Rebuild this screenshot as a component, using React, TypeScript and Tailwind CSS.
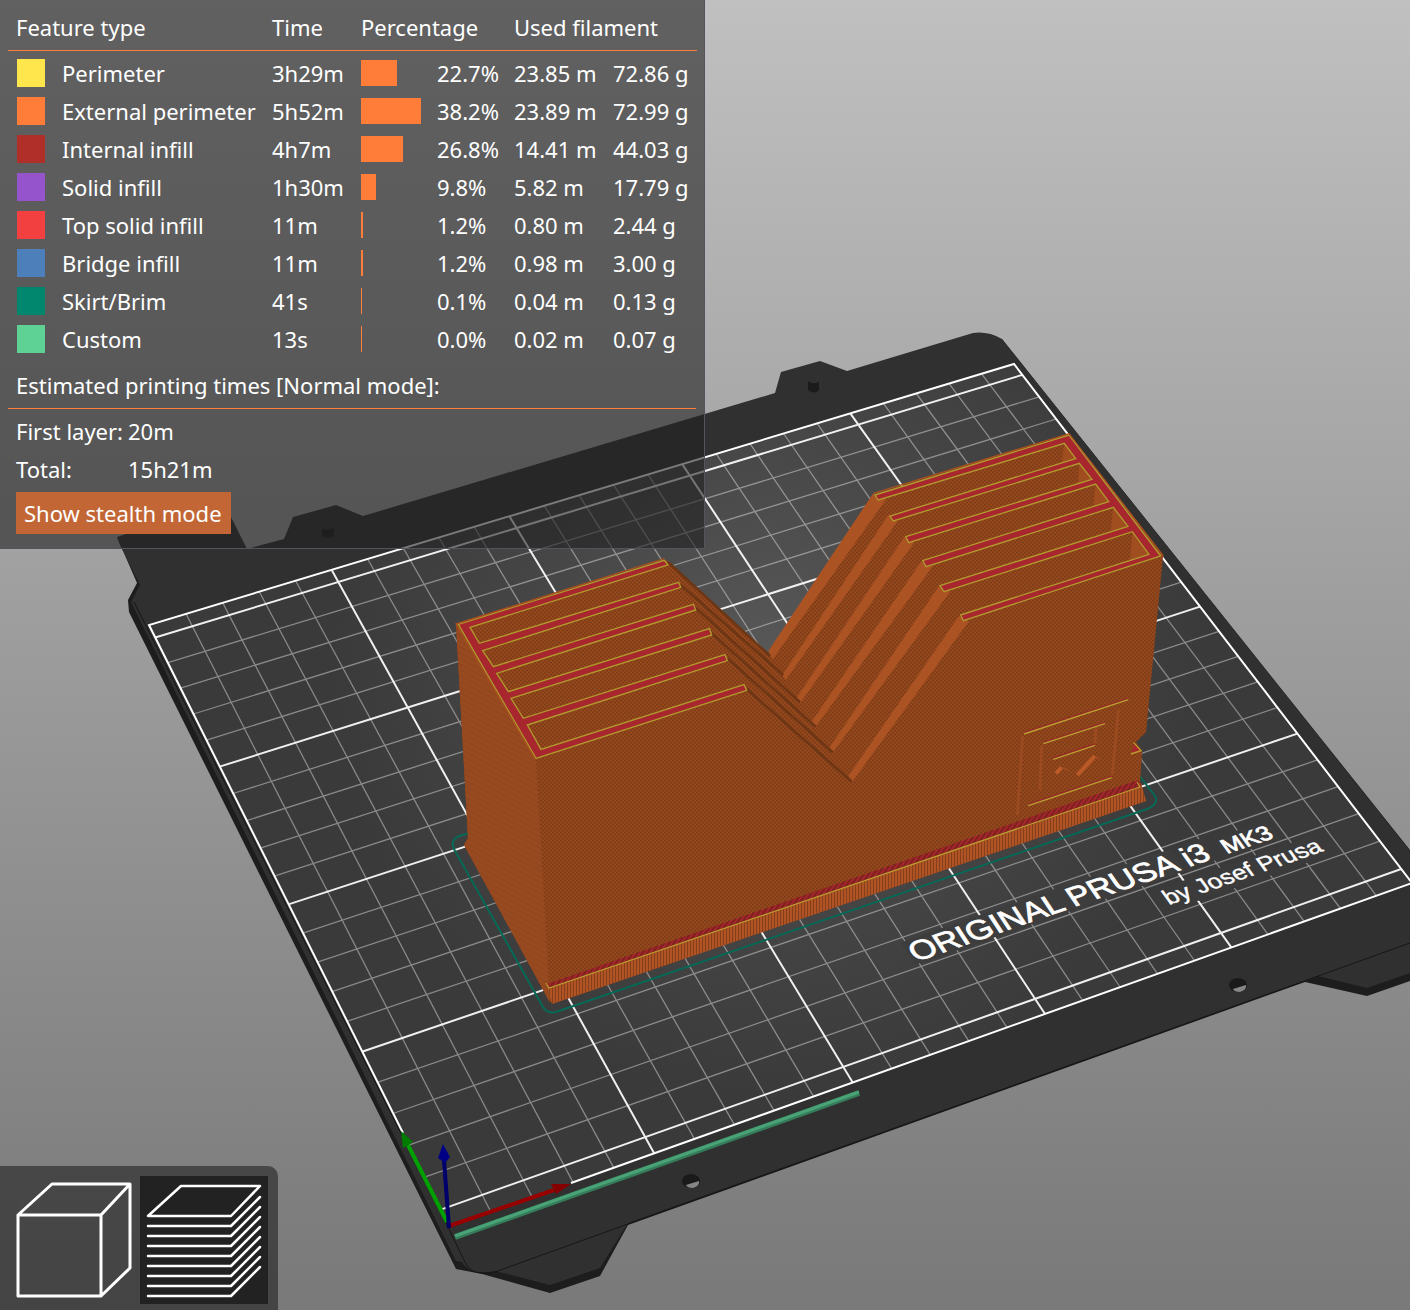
import React from 'react';

interface Feature {
  name: string;
  swatch: string;
  time: string;
  percent: number;
  length: string;
  weight: string;
}

const FEATURES: Feature[] = [
  { name: 'Perimeter', swatch: 'bg-[#ffe64d]', time: '3h29m', percent: 22.7, length: '23.85 m', weight: '72.86 g' },
  { name: 'External perimeter', swatch: 'bg-[#ff7d38]', time: '5h52m', percent: 38.2, length: '23.89 m', weight: '72.99 g' },
  { name: 'Internal infill', swatch: 'bg-[#b02f29]', time: '4h7m', percent: 26.8, length: '14.41 m', weight: '44.03 g' },
  { name: 'Solid infill', swatch: 'bg-[#9654cc]', time: '1h30m', percent: 9.8, length: '5.82 m', weight: '17.79 g' },
  { name: 'Top solid infill', swatch: 'bg-[#f24040]', time: '11m', percent: 1.2, length: '0.80 m', weight: '2.44 g' },
  { name: 'Bridge infill', swatch: 'bg-[#4d80ba]', time: '11m', percent: 1.2, length: '0.98 m', weight: '3.00 g' },
  { name: 'Skirt/Brim', swatch: 'bg-[#00876e]', time: '41s', percent: 0.1, length: '0.04 m', weight: '0.13 g' },
  { name: 'Custom', swatch: 'bg-[#5ed194]', time: '13s', percent: 0.0, length: '0.02 m', weight: '0.07 g' },
];

const MAX_PERCENT = Math.max(...FEATURES.map((f) => f.percent));
const BAR_WIDTH = 60;

const BED_W = 250;
const BED_D = 210;

// Screen corners of the bed: front left, front right, back right, back left
const [P00, P10, P11, P01] = [[449, 1226], [1412, 883], [1014, 364], [149, 625]];

// Perspective mapping from bed millimetres to scene coordinates
const project = (x: number, y: number): [number, number] => {
  const dx1 = P10[0] - P11[0];
  const dx2 = P01[0] - P11[0];
  const sx = P00[0] - P10[0] + P11[0] - P01[0];
  const dy1 = P10[1] - P11[1];
  const dy2 = P01[1] - P11[1];
  const sy = P00[1] - P10[1] + P11[1] - P01[1];
  const det = dx1 * dy2 - dx2 * dy1;
  const g = (sx * dy2 - dx2 * sy) / det;
  const h = (dx1 * sy - sx * dy1) / det;
  const u = x / BED_W;
  const v = y / BED_D;
  const w = g * u + h * v + 1;
  return [
    ((P10[0] - P00[0] + g * P10[0]) * u + (P01[0] - P00[0] + h * P01[0]) * v + P00[0]) / w,
    ((P10[1] - P00[1] + g * P10[1]) * u + (P01[1] - P00[1] + h * P01[1]) * v + P00[1]) / w,
  ];
};

const segment = (x1: number, y1: number, x2: number, y2: number) => {
  const a = project(x1, y1);
  const b = project(x2, y2);
  return `M${a[0].toFixed(1)} ${a[1].toFixed(1)}L${b[0].toFixed(1)} ${b[1].toFixed(1)}`;
};

// Lays lettering flat on the bed; one text unit is a quarter of a millimetre
const onBed = (px: number, py: number, x: number, y: number) => {
  const o = project(x, y);
  const r = project(x + 1, y);
  const d = project(x, y - 1);
  const m = [r[0] - o[0], r[1] - o[1], d[0] - o[0], d[1] - o[1]].map((n) => (n / 4).toFixed(4));
  return `matrix(${m.join(' ')} ${px} ${py})`;
};

const thinLines: string[] = [];
const boldLines: string[] = [];
for (let x = 10; x < BED_W; x += 10) {
  (x % 50 === 0 ? boldLines : thinLines).push(segment(x, 0, x, BED_D));
}
for (let y = 5; y < BED_D; y += 10) {
  (y % 50 === 5 ? boldLines : thinLines).push(segment(0, y, BED_W, y));
}

const LIT_SLOPES = [
  '368,222 408,238 68,718 55,693',
  '415,285 443,303 107,780 97,765',
  '462,352 492,368 150,850 140,833',
  '513,425 547,440 197,920 185,905',
  '567,498 600,515 248,998 237,985',
  '627,588 657,603 307,1085 295,1068',
];

const DARK_SLOPES = [
  'M684 66L990 348',
  'M722 135L1030 405',
  'M767 203L1080 487',
  'M815 280L1127 560',
  'M862 355L1178 637',
  'M920 447L1235 725',
];

const POCKET_ENDS = [
  '943,70 977,116 935,128',
  '988,130 1026,178 984,190',
  '1037,192 1076,245 1030,260',
  '1090,262 1134,319 1082,333',
  '1147,335 1197,403 1140,420',
];

const Plate: React.FC = () => (
  <g>
    <path
      fill="#1d1d1d"
      d="M117 537L137 583L128 600L129 612L456 1269L482 1274L550 1293L600 1276L628 1225L1305 982L1367 996L1410 981V850L1002 339L600 520L137 572Z"
    />
    <path
      fill="#303030"
      d="M117 537L222 502L231 517L247 549L284 539L293 517L336 505L363 516L775 393L781 372L820 361L847 371L973 333Q988 331 1002 339L1410 851V973L1367 988L1318 976L628 1223L600 1268L550 1285L495 1271Q470 1276 462 1262L456 1261L131 602L140 585L120 545Z"
    />
    <path fill="none" stroke="#171717" d="M134 602L447 1225L465 1262Q470 1273 482 1273H492L628 1224L1410 943" />
    <path fill="#1b1b1b" d="M322 529v7q6 4 12 0v-8q-6 3-12 1ZM808 381v9q6 5 11 0v-8q-6 3-11-1Z" />
    {[[691, 1181], [1238, 985]].map(([cx, cy]) => (
      <g key={cx} transform={`translate(${cx} ${cy})`}>
        <ellipse rx="9" ry="7" fill="#1a1a1a" />
        <path fill="#868686" d="M-5 4L8 0Q9 5 2 7Q-4 7-5 4Z" />
      </g>
    ))}
  </g>
);

const Bed: React.FC = () => (
  <g>
    <polygon points="449,1226 1412,883 1014,364 149,625" fill="url(#bed)" />
    <path d={thinLines.join('')} stroke="#fff" strokeOpacity="0.4" strokeWidth="1.3" />
    <path d={boldLines.join('')} stroke="#fff" strokeOpacity="0.92" strokeWidth="2" />
    <path d="M403 1133L149 625L1014 364L1412 883L571 1183" fill="none" stroke="#fff" strokeWidth="2" />
    <g fontFamily="'Liberation Sans', Arial, sans-serif" fontSize="34" fill="#fff" stroke="#fff" strokeWidth="0.9">
      <g transform={onBed(916, 962, 150, 28)}>
        <rect x="-2" y="-28" width="168" height="31" fill="#3d3d3d" stroke="none" />
        <text>ORIGINAL</text>
      </g>
      <g transform={onBed(1074, 907, 180, 28)}>
        <rect x="-2" y="-28" width="122" height="31" fill="#3d3d3d" stroke="none" />
        <text>PRUSA</text>
      </g>
      <g transform={onBed(1189, 867, 205, 28)}>
        <rect x="-2" y="-28" width="30" height="31" fill="#3b3b3b" stroke="none" />
        <text>i3</text>
      </g>
      <g transform={onBed(1227, 854, 215, 30)}>
        <rect x="-4" y="-23" width="62" height="27" fill="#3b3b3b" stroke="none" />
        <text fontSize="26">MK3</text>
      </g>
      <g transform={onBed(1169, 905, 210, 20)} strokeWidth="0.5">
        <rect x="-3" y="-22" width="178" height="29" fill="#3b3b3b" stroke="none" />
        <text fontSize="26">by Josef Prusa</text>
      </g>
    </g>
  </g>
);

const Skirt: React.FC = () => (
  <path
    d="M470 833L459 836Q450 840 454 849L543 1007Q547 1014 556 1012L1147 809Q1159 804 1155 796L1138 774"
    fill="none"
    stroke="#046a56"
    strokeWidth="2"
  />
);

const Model: React.FC = () => (
  <g>
    <path
      fill="#8e441b"
      d="M456 624L666 560L768 655L875 494L1068 434L1163 556L1146 732L1136 742L1142 751L1140 783L1146 801L552 1004L464 845L468 838Z"
    />
    <path fill="url(#weave)" d="M456 624L666 560L768 655L875 494L1068 434L1163 556L1146 732L1136 742L1142 751L1140 783L549 988L536 758Z" />
    <path fill="#97491f" d="M456 624L536 758L550 1003L464 845L468 838Z" />
    <path fill="url(#arcs)" d="M456 624L536 758L550 1003L464 845L468 838Z" />

    {/* base flange */}
    <path fill="#b05426" d="M547 985L552 1004L1146 801L1141 783Z" />
    <path fill="url(#ribs)" d="M547 985L552 1004L1146 801L1141 783Z" />
    <path fill="#a3262c" d="M547 984L549 988L1141 787L1138 780Z" />
    <path fill="url(#hatch)" d="M547 984L549 988L1141 787L1138 780Z" />
    <path d="M546 983L549 988L1140 787L1137 782" fill="none" stroke="#b9a02f" strokeWidth="1.2" />

    <g transform="translate(750 420) scale(0.33333)">
      {LIT_SLOPES.map((points) => (
        <polygon key={points} points={points} fill="#ac5324" />
      ))}
      {POCKET_ENDS.map((points) => (
        <polygon key={points} points={points} fill="#a04d20" />
      ))}
      <path
        fill="#a8262d"
        stroke="#b09a2d"
        strokeWidth="4"
        d="M375 225L957 45L1232 408L640 602L632 585L1197 403L1147 335L582 515L570 497L1134 319L1090 262L528 440L518 422L1076 245L1037 192L476 368L467 350L1026 178L988 130L430 303L420 288L977 116L943 70L385 240Z"
      />
      <path d="M370 220L957 41L1240 408" fill="none" stroke="#a9501f" strokeWidth="4" />
    </g>

    <g transform="translate(440 540) scale(0.33333)">
      {DARK_SLOPES.map((d) => (
        <path key={d} d={d} stroke="#6d3615" strokeWidth="8" />
      ))}
      <path
        fill="#a8262d"
        stroke="#b09a2d"
        strokeWidth="4"
        d="M55 253L673 61L684 75L90 262L118 310L716 127L722 142L128 332L160 380L760 193L767 210L170 400L205 455L808 266L815 285L213 475L250 535L855 344L862 362L262 555L303 628L912 434L920 451L288 655Z"
      />
      <path d="M286 658L48 252L673 56" fill="none" stroke="#a9501f" strokeWidth="4" />
    </g>

    {/* embossed badge */}
    <g transform="translate(980 660) scale(0.33333)" fill="none">
      <path
        d="M128 228L112 465M185 255L180 390M415 150L397 345M348 200L345 250"
        stroke="#9c4b20"
        strokeWidth="8"
      />
      <path d="M228 340L245 322M292 345L345 288" stroke="#bb5a27" strokeWidth="12" />
      <path d="M245 322L268 332M345 288L358 298" stroke="#a04d20" strokeWidth="4" />
      <path d="M132 218L445 115M190 247L375 187M220 294L345 252M145 433L395 349" stroke="#98262c" strokeWidth="4" />
      <path d="M132 222L445 119M190 251L375 191M220 298L345 256M145 437L395 353" stroke="#b9a02f" strokeWidth="4" />
      <path d="M463 250L483 272L455 281Z" fill="#a8262d" />
      <path d="M461 248L483 272L453 282" stroke="#b9a02f" strokeWidth="4" />
    </g>
  </g>
);

const Axes: React.FC = () => (
  <g strokeLinecap="butt">
    <path d="M455 1237L859 1093" stroke="#357d5a" strokeWidth="6" />
    <path d="M455 1236L859 1092" stroke="#4aa377" strokeWidth="3" />
    <path d="M449 1226L554 1190" stroke="#980000" strokeWidth="4" />
    <path d="M571 1184L551 1184L556 1194Z" fill="#850000" />
    <path d="M447 1222L408 1145" stroke="#00a000" strokeWidth="4" />
    <path d="M401 1131L403 1148L413 1142Z" fill="#007c00" />
    <path d="M449 1228L444 1160" stroke="#00006a" strokeWidth="4" />
    <path d="M443 1144L438 1158L445 1163L450 1157Z" fill="#000085" />
  </g>
);

const Scene: React.FC = () => (
  <svg
    className="absolute inset-0 h-full w-full"
    viewBox="0 0 1410 1310"
    preserveAspectRatio="xMinYMin slice"
    role="img"
    aria-label="Sliced model on the print bed"
  >
    <defs>
      <radialGradient id="bed" gradientUnits="userSpaceOnUse" cx="770" cy="660" r="440">
        <stop offset="0" stopColor="#585858" />
        <stop offset="0.5" stopColor="#474747" />
        <stop offset="1" stopColor="#3a3a3a" />
      </radialGradient>
      <pattern id="weave" width="4" height="4" patternUnits="userSpaceOnUse">
        <path d="M0 0h2v1H0zM2 2h2v1H2z" fill="#6a3716" fillOpacity="0.6" />
        <path d="M2 0h2v1H2zM0 2h2v1H0z" fill="#a84e1d" fillOpacity="0.5" />
      </pattern>
      <pattern id="arcs" width="5" height="5" patternUnits="userSpaceOnUse" patternTransform="rotate(28)">
        <path d="M0 0h5v1H0z" fill="#823f1a" fillOpacity="0.35" />
      </pattern>
      <pattern id="ribs" width="3" height="8" patternUnits="userSpaceOnUse">
        <path d="M0 0h1v8H0z" fill="#7a3a18" fillOpacity="0.8" />
      </pattern>
      <pattern id="hatch" width="4" height="4" patternUnits="userSpaceOnUse" patternTransform="rotate(35)">
        <path d="M0 0h2v4H0z" fill="#6e2018" fillOpacity="0.7" />
      </pattern>
    </defs>
    <Plate />
    <Bed />
    <Skirt />
    <Model />
    <Axes />
  </svg>
);

const Legend: React.FC = () => (
  <section className="relative w-[705px] border-r border-b border-[#54545c] bg-[#212121]/60 px-2 pt-[5px] pb-[14px]">
    <table className="w-[689px] table-fixed border-collapse text-left">
      <colgroup>
        <col className="w-[54px]" />
        <col className="w-[210px]" />
        <col className="w-[89px]" />
        <col className="w-[76px]" />
        <col className="w-[77px]" />
        <col className="w-[99px]" />
        <col className="w-[84px]" />
      </colgroup>
      <thead>
        <tr className="h-[45px] border-b border-[#ff7d38]">
          <th scope="col" colSpan={2} className="p-0 pl-2 font-normal">Feature type</th>
          <th scope="col" className="p-0 font-normal">Time</th>
          <th scope="col" colSpan={2} className="p-0 font-normal">Percentage</th>
          <th scope="col" colSpan={2} className="p-0 font-normal">Used filament</th>
        </tr>
      </thead>
      <tbody className="before:block before:h-1 before:content-['']">
        {FEATURES.map((f) => (
          <tr key={f.name} className="h-[38px]">
            <td className="p-0 pl-[9px]">
              <div className={`mb-0.5 h-7 w-7 ${f.swatch}`} />
            </td>
            <th scope="row" className="p-0 pb-0.5 font-normal">{f.name}</th>
            <td className="p-0 pb-0.5">{f.time}</td>
            <td className="p-0">
              <div
                className="mb-0.5 h-[26px] min-w-px bg-[#ff7d38]"
                style={{ width: Math.round((f.percent / MAX_PERCENT) * BAR_WIDTH) }}
              />
            </td>
            <td className="p-0 pb-0.5">{f.percent.toFixed(1)}%</td>
            <td className="p-0 pb-0.5">{f.length}</td>
            <td className="p-0 pb-0.5">{f.weight}</td>
          </tr>
        ))}
      </tbody>
    </table>

    <h2 className="mb-[3px] border-b border-[#ff7d38] px-2 pt-[11px] pb-2">Estimated printing times [Normal mode]:</h2>
    <dl className="grid grid-cols-[112px_1fr] px-2 leading-[38px]">
      <dt>First layer:</dt>
      <dd>20m</dd>
      <dt>Total:</dt>
      <dd>15h21m</dd>
    </dl>
    <button type="button" className="mt-1 ml-2 h-[42px] w-[215px] bg-[#c26636] px-2 text-left">
      Show stealth mode
    </button>
  </section>
);

const ViewToolbar: React.FC = () => (
  <nav className="relative flex gap-0.5 rounded-tr-[10px] bg-[#212121]/60 px-2.5 pt-2.5 pb-1.5">
    <button type="button" aria-label="3D editor view" className="h-32 w-32">
      <svg viewBox="0 0 128 128" fill="none" stroke="#fff" strokeWidth="3" strokeLinejoin="round" strokeLinecap="round">
        <path d="M8 39H91V120H8ZM8 39L42 8H120L91 39M120 8V92L91 120" />
      </svg>
    </button>
    <button type="button" aria-label="Preview" aria-pressed="true" className="h-32 w-32 bg-[#222222]">
      <svg viewBox="0 0 128 128" fill="none" stroke="#fff" strokeWidth="2.5" strokeLinejoin="round" strokeLinecap="round">
        <path d="M8 40H91L120 10H41Z" />
        {[0, 1, 2, 3, 4, 5, 6, 7].map((i) => (
          <path key={i} d={`M8 ${50 + i * 10}H91L120 ${21 + i * 10}`} />
        ))}
      </svg>
    </button>
  </nav>
);

const App: React.FC = () => {
  return (
    <main className="relative flex min-h-screen flex-col items-start justify-between overflow-hidden bg-linear-to-b from-[#c0c0c0] to-[#797979] font-['Noto_Sans',sans-serif] text-[22px] leading-[30px] text-white">
      <Scene />
      <Legend />
      <ViewToolbar />
    </main>
  );
};

export default App;
